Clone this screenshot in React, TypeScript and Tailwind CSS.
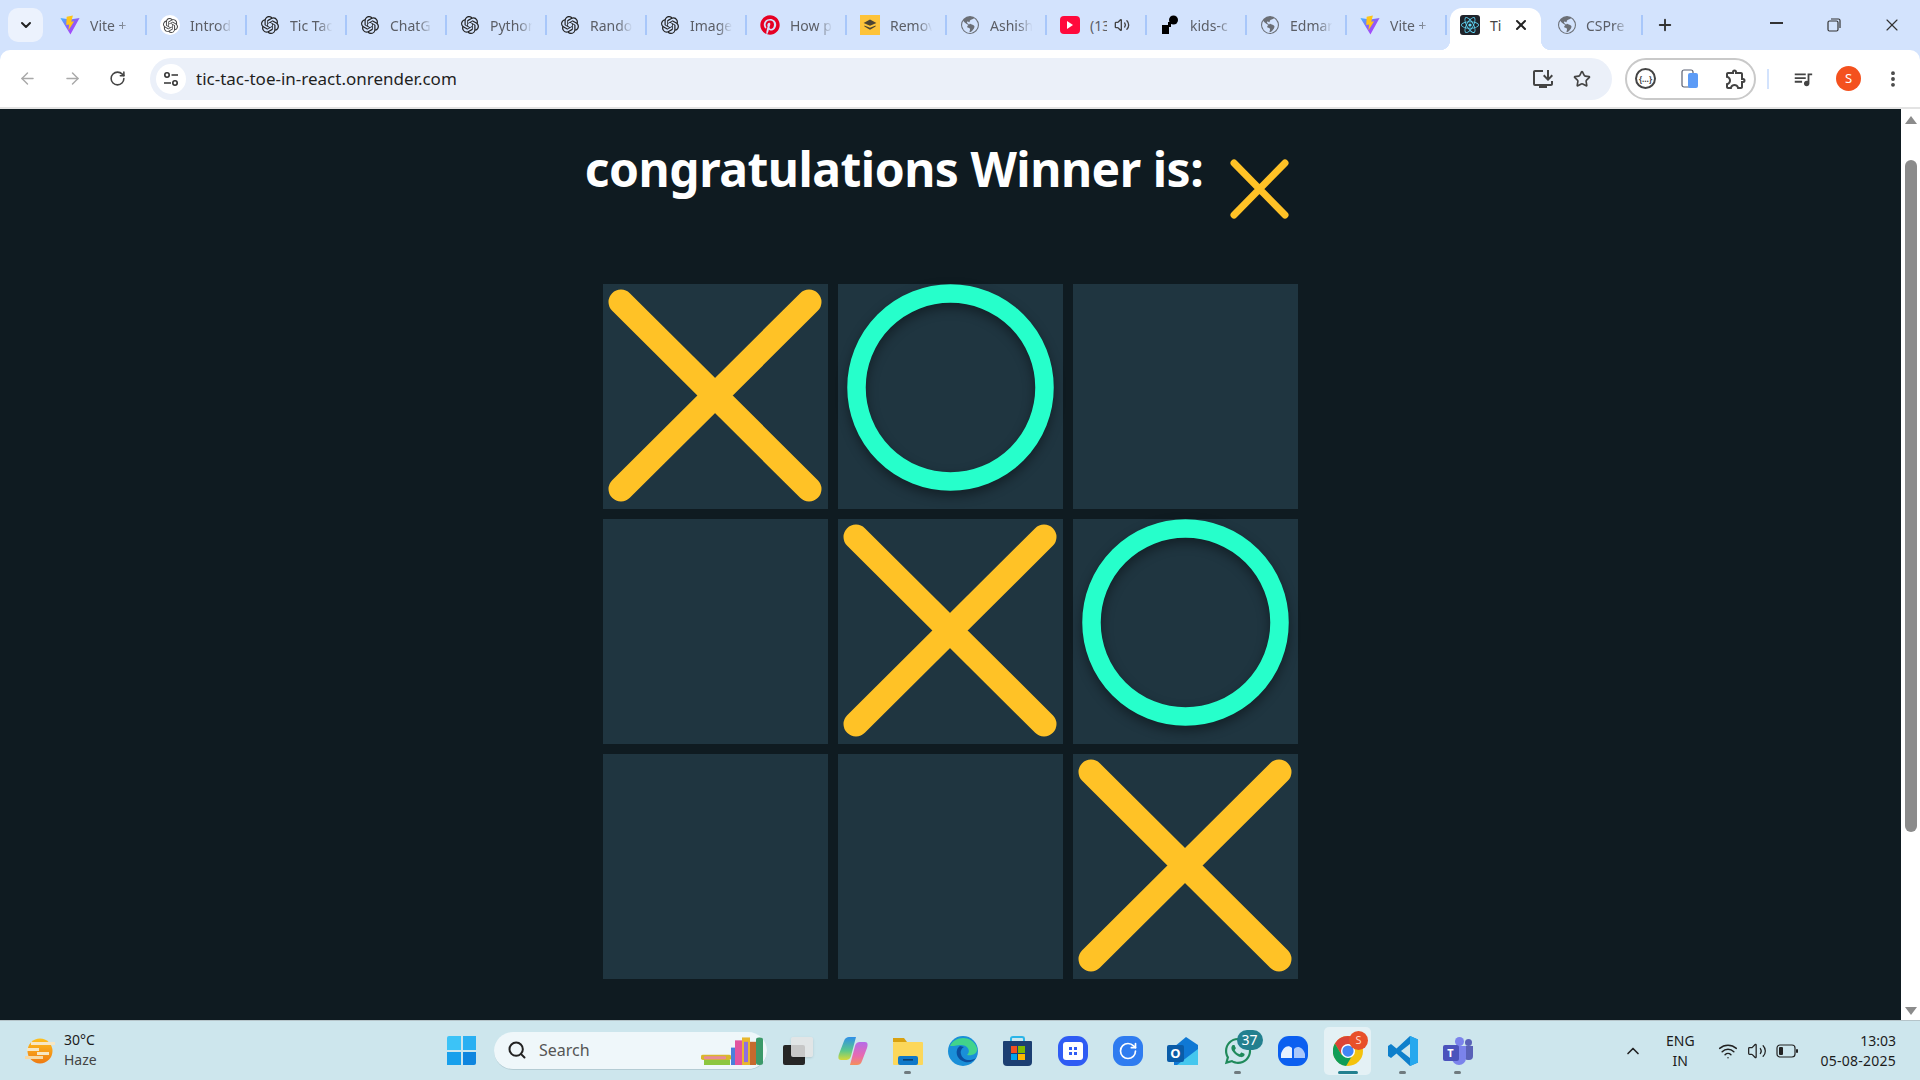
import { ArrowLeft, ArrowRight, ChevronDown, ChevronUp, EllipsisVertical, Plus, RotateCw, Search, Star, Volume2, Wifi, X } from "lucide-react";
import { BsGlobeAmericas } from "react-icons/bs";
import { FaPinterest, FaReact, FaWhatsapp } from "react-icons/fa";
import { MdOutlineExtension, MdOutlineInstallDesktop, MdQueueMusic } from "react-icons/md";
import { SiOpenai } from "react-icons/si";
import type { ReactNode } from "react";

function ViteIcon() {
  return (
    <svg viewBox="0 0 24 24" className="h-[22px] w-[22px]">
      <defs>
        <linearGradient id="vitebody" x1="0" y1="0" x2="1" y2="1">
          <stop offset="0" stopColor="#41b8ff" />
          <stop offset="0.5" stopColor="#8f5cf7" />
          <stop offset="1" stopColor="#bd34fe" />
        </linearGradient>
      </defs>
      <path d="M0.5 3.5 L12 5.5 L23.5 3.5 L12.5 23.5 Z" fill="url(#vitebody)" />
      <path d="M15.5 0.5 L8 2 L7.5 12 L11 11.5 L10 18.5 L17 7.5 L13.5 8 Z" fill="#ffc517" />
    </svg>
  );
}

function Glob() {
  return <BsGlobeAmericas className="h-[18px] w-[18px] text-[#6b6f76]" />;
}

function ChatIcon({ bg }: { bg?: boolean }) {
  return (
    <div className={`flex h-5 w-5 items-center justify-center rounded-full ${bg ? "bg-white" : ""}`}>
      <SiOpenai className={bg ? "h-[15px] w-[15px] text-[#444]" : "h-[18px] w-[18px] text-[#222]"} />
    </div>
  );
}

function RemoveIcon() {
  return (
    <div className="flex h-5 w-5 items-center justify-center bg-[#fdc33a]">
      <svg viewBox="0 0 20 20" className="h-4 w-4">
        <path d="M10 3 L18 7.5 L10 11 L2 7.5 Z" fill="#4c4433" />
        <path d="M3 10.5 L10 13.5 L17 10.5 L17 12 L10 16 L3 12 Z" fill="#4c4433" />
      </svg>
    </div>
  );
}

function YoutubeIcon() {
  return (
    <div className="flex h-[18px] w-5 items-center justify-center rounded-[4px] bg-[#ff0a3c]">
      <div className="h-0 w-0 border-y-[4px] border-l-[6px] border-y-transparent border-l-white" />
    </div>
  );
}

function KidsIcon() {
  return (
    <svg viewBox="0 0 20 20" className="h-5 w-5">
      <path d="M2 10 H8 V7 H11 V12 H9 V19 H2 Z" fill="#000" />
      <circle cx="13.5" cy="5" r="4.5" fill="#000" />
    </svg>
  );
}

type TabItem = { label: string; icon: ReactNode; audio?: boolean };

const tabs: TabItem[] = [
  { label: "Vite +", icon: <ViteIcon /> },
  { label: "Introd", icon: <ChatIcon bg /> },
  { label: "Tic Tac", icon: <ChatIcon /> },
  { label: "ChatG", icon: <ChatIcon /> },
  { label: "Python", icon: <ChatIcon /> },
  { label: "Rando", icon: <ChatIcon /> },
  { label: "Image", icon: <ChatIcon /> },
  { label: "How p", icon: <FaPinterest className="h-5 w-5 text-[#e60023]" /> },
  { label: "Remov", icon: <RemoveIcon /> },
  { label: "Ashish", icon: <Glob /> },
  { label: "(13", icon: <YoutubeIcon />, audio: true },
  { label: "kids-c", icon: <KidsIcon /> },
  { label: "Edmar", icon: <Glob /> },
  { label: "Vite +", icon: <ViteIcon /> },
];

function Tab({ tab }: { tab: TabItem }) {
  return (
    <div className="flex h-full w-[100px] flex-shrink-0 items-center pl-[13px]">
      <div className="flex h-5 w-5 flex-shrink-0 items-center justify-center">{tab.icon}</div>
      <span className={`ml-[10px] whitespace-nowrap text-[14px] text-[#5b5e66] ${tab.audio ? "w-[17px] overflow-hidden" : "w-[50px] [mask-image:linear-gradient(to_right,black_55%,transparent_85%)]"}`}>
        {tab.label}
      </span>
      {tab.audio && <Volume2 className="ml-[7px] h-4 w-4 text-[#444]" />}
      <div className="ml-auto h-5 w-[2px] flex-shrink-0 bg-[#a8c7fa]" />
    </div>
  );
}

function TabStrip() {
  return (
    <div className="flex h-[50px] flex-shrink-0 items-center bg-[#d3e3fd] pl-2">
      <div className="flex h-[34px] w-[35px] items-center justify-center rounded-[10px] bg-[#ecf2fd]">
        <ChevronDown className="h-4 w-4 text-[#222]" strokeWidth={3} />
      </div>
      <div className="ml-1 flex h-full">
        {tabs.map((t, i) => (
          <Tab key={i} tab={t} />
        ))}
        <div className="relative ml-[3px] mt-2 flex h-[42px] w-[91px] items-center rounded-t-[12px] bg-white pb-2 pl-[10px]">
          <span className="absolute bottom-0 left-[-10px] h-[10px] w-[10px] bg-[radial-gradient(circle_at_0_0,transparent_10px,white_10.5px)]" />
          <span className="absolute bottom-0 right-[-10px] h-[10px] w-[10px] bg-[radial-gradient(circle_at_100%_0,transparent_10px,white_10.5px)]" />
          <div className="flex h-5 w-5 items-center justify-center rounded-[3px] bg-[#20232a]">
            <FaReact className="h-[18px] w-[18px] text-[#61dafb]" />
          </div>
          <span className="ml-[10px] w-[12px] text-[14px] text-[#444]">Ti</span>
          <X className="ml-[11px] h-4 w-4 text-[#222]" strokeWidth={3} />
        </div>
        <div className="flex h-full w-[102px] items-center pl-[17px]">
          <Glob />
          <span className="ml-[10px] w-[50px] whitespace-nowrap text-[14px] text-[#5b5e66] [mask-image:linear-gradient(to_right,black_55%,transparent_85%)]">
            CSPre
          </span>
          <div className="ml-auto h-5 w-[2px] flex-shrink-0 bg-[#a8c7fa]" />
        </div>
      </div>
      <Plus className="ml-[13px] h-[18px] w-[18px] text-[#333]" strokeWidth={2.5} />
      <div className="ml-auto flex h-full">
        <div className="flex w-[57px] items-center justify-center pr-[4px]">
          <div className="mb-[4px] h-[2px] w-[13px] bg-[#333]" />
        </div>
        <div className="flex w-[56px] items-center justify-center pr-[2px]">
          <svg viewBox="0 0 14 14" className="h-[14px] w-[14px]" fill="none" stroke="#333" strokeWidth="1.2">
            <rect x="1" y="3" width="10" height="10" rx="1.5" />
            <path d="M4 1 H11.5 A1.5 1.5 0 0 1 13 2.5 V10" />
          </svg>
        </div>
        <div className="flex w-[57px] items-center justify-center">
          <X className="h-5 w-5 text-[#333]" strokeWidth={1.4} />
        </div>
      </div>
    </div>
  );
}

function SiteIcon() {
  return (
    <svg viewBox="0 0 16 16" className="h-4 w-4" fill="none" stroke="#333" strokeWidth="1.6">
      <circle cx="4" cy="4" r="2.2" />
      <path d="M8.5 4 H15 M1 12 H8" />
      <circle cx="12" cy="12" r="2.2" />
    </svg>
  );
}

function Toolbar() {
  return (
    <div className="flex h-[59px] flex-shrink-0 items-center rounded-t-[10px] border-b-2 border-[#e3e3e3] bg-white">
      <ArrowLeft className="ml-[18px] h-[19px] w-[19px] text-[#a9a9a9]" strokeWidth={1.8} />
      <ArrowRight className="ml-[26px] h-[19px] w-[19px] text-[#a9a9a9]" strokeWidth={1.8} />
      <RotateCw className="ml-[27px] h-[17px] w-[17px] text-[#444]" strokeWidth={2.2} />
      <div className="ml-[24px] flex h-[42px] w-[1462px] items-center rounded-full bg-[#ebf0f9] pl-[6px]">
        <div className="flex h-[30px] w-[30px] items-center justify-center rounded-full bg-white">
          <SiteIcon />
        </div>
        <span className="ml-[10px] text-[17px] text-[#1f1f1f]">tic-tac-toe-in-react.onrender.com</span>
        <MdOutlineInstallDesktop className="ml-auto h-[24px] w-[24px] text-[#444]" />
        <Star className="ml-[18px] mr-[21px] h-[18px] w-[18px] text-[#444]" strokeWidth={2.2} />
      </div>
      <div className="ml-[13px] flex h-[42px] w-[131px] items-center rounded-full border-2 border-[#c9c9c9] pl-[8px]">
        <div className="flex h-[21px] w-[21px] items-center justify-center rounded-full border-2 border-[#444] text-[8px] font-bold leading-none text-[#444]">
          {"{…}"}
        </div>
        <svg viewBox="0 0 18 20" className="ml-[25px] h-5 w-[18px]">
          <rect x="1" y="1" width="11" height="17" rx="2" fill="white" stroke="#5a6072" strokeWidth="1.2" />
          <rect x="7" y="4" width="10" height="15" rx="2" fill="#5c9bf6" />
        </svg>
        <MdOutlineExtension className="ml-[25px] h-[24px] w-[24px] text-[#444]" />
      </div>
      <div className="ml-[11px] h-[20px] w-[2px] bg-[#d3e3fd]" />
      <MdQueueMusic className="ml-[23px] h-[22px] w-[22px] text-[#444]" />
      <div className="ml-[22px] flex h-[25px] w-[25px] items-center justify-center rounded-full bg-[#f4511e] text-[13px] text-white">S</div>
      <EllipsisVertical className="ml-[22px] h-5 w-5 text-[#444]" strokeWidth={2.6} />
    </div>
  );
}

function CrossMark() {
  return (
    <svg viewBox="0 0 225 225" className="h-[225px] w-[225px] blur-[0.6px]">
      <path d="M18 18 L206 205 M206 18 L18 205" stroke="#ffc226" strokeWidth={25} strokeLinecap="round" />
    </svg>
  );
}

function Cell({ mark }: { mark?: "x" | "o" }) {
  return (
    <div className="h-[225px] w-[225px] bg-[#1f3540]">
      {mark === "x" && <CrossMark />}
      {mark === "o" && (
        <svg viewBox="0 0 225 225" className="h-[225px] w-[225px] drop-shadow-[0_5px_6px_rgba(0,0,0,0.4)]">
          <circle cx="112.5" cy="103.5" r="94" fill="none" stroke="#26ffcb" strokeWidth="18.5" />
        </svg>
      )}
    </div>
  );
}

function Page() {
  return (
    <div className="flex min-w-0 flex-1 flex-col items-center bg-[#0f1b21]">
      <div className="mt-[27px] flex h-[94px] items-start">
        <h1 className="text-[48px] font-bold leading-[65px] tracking-[-0.5px] text-white">congratulations Winner is:</h1>
        <div className="ml-[22px] mr-[25px] mt-[21px] h-[66px] w-[66px]">
          <svg viewBox="0 0 66 66" className="h-[66px] w-[66px]">
            <path d="M9 6 L60 58 M60 6 L9 58" stroke="#ffc226" strokeWidth="7" strokeLinecap="round" />
          </svg>
        </div>
      </div>
      <div className="mt-[54px] grid grid-cols-[225px_225px_225px] gap-[10px]">
        <Cell mark="x" />
        <Cell mark="o" />
        <Cell />
        <Cell />
        <Cell mark="x" />
        <Cell mark="o" />
        <Cell />
        <Cell />
        <Cell mark="x" />
      </div>
    </div>
  );
}

function Scrollbar() {
  return (
    <div className="flex w-[19px] flex-shrink-0 flex-col items-center bg-white">
      <div className="mt-[7px] h-0 w-0 border-x-[6px] border-b-[8px] border-x-transparent border-b-[#8b8b8b]" />
      <div className="mt-[36px] h-[672px] w-[12px] rounded-full bg-[#8b8b8b]" />
      <div className="mb-[5px] mt-auto h-0 w-0 border-x-[6px] border-t-[8px] border-x-transparent border-t-[#8b8b8b]" />
    </div>
  );
}

function WeatherIcon() {
  return (
    <svg viewBox="0 0 30 26" className="h-[26px] w-[30px]">
      <defs>
        <linearGradient id="sun" x1="0" y1="0" x2="0" y2="1">
          <stop offset="0" stopColor="#ffc01e" />
          <stop offset="1" stopColor="#ee7a12" />
        </linearGradient>
      </defs>
      <circle cx="15" cy="13" r="12.5" fill="url(#sun)" />
      <rect x="6" y="4" width="24" height="3" fill="#f7e7c4" />
      <rect x="2" y="10" width="12" height="3" fill="#f7e7c4" />
      <rect x="12" y="14" width="12" height="3" fill="#f7e7c4" />
      <rect x="0" y="18" width="18" height="3" fill="#f7d9a4" />
    </svg>
  );
}

function WinLogo() {
  return (
    <div className="grid h-[29px] w-[29px] grid-cols-2 gap-[2px]">
      <div className="rounded-tl-[2px] bg-[#3cc3f7]" />
      <div className="bg-[#2ab0f2]" />
      <div className="bg-[#18a0ec]" />
      <div className="rounded-br-[2px] bg-[#0f86df]" />
    </div>
  );
}

function Books() {
  return (
    <svg viewBox="0 0 64 40" preserveAspectRatio="none" className="h-[29px] w-[64px]">
      <rect x="0" y="26" width="30" height="7" rx="2" fill="#d9b72a" />
      <rect x="3" y="28" width="22" height="4" rx="1" fill="#e88b97" />
      <rect x="3" y="33" width="26" height="7" fill="#8cc63f" />
      <rect x="30" y="16" width="4" height="24" fill="#4a7fdc" />
      <rect x="34" y="6" width="7" height="34" fill="#e255a0" />
      <rect x="41" y="2" width="8" height="38" fill="#e8b72e" />
      <rect x="43" y="8" width="4" height="28" fill="#8f6fe0" />
      <rect x="49" y="8" width="6" height="32" fill="#c66a2e" />
      <rect x="55" y="2" width="7" height="38" rx="3" fill="#3c9a6a" />
    </svg>
  );
}

function TasksIcon() {
  return (
    <div className="relative h-[28px] w-[30px]">
      <div className="absolute bottom-0 left-0 h-[20px] w-[22px] rounded-[2px] bg-[#262626]" />
      <div className="absolute right-0 top-0 h-[20px] w-[22px] rounded-[2px] bg-[#e4e4e4]/85 shadow-sm" />
    </div>
  );
}

function CopilotIcon() {
  return (
    <svg viewBox="0 0 30 28" className="h-[28px] w-[30px]">
      <defs>
        <linearGradient id="cpa" x1="0" y1="0" x2="0" y2="1">
          <stop offset="0" stopColor="#2f8fe8" />
          <stop offset="0.6" stopColor="#5cc98a" />
          <stop offset="1" stopColor="#d6d93a" />
        </linearGradient>
        <linearGradient id="cpb" x1="0" y1="0" x2="0" y2="1">
          <stop offset="0" stopColor="#b56be8" />
          <stop offset="0.6" stopColor="#e86ab0" />
          <stop offset="1" stopColor="#f4905a" />
        </linearGradient>
      </defs>
      <path d="M11 0 H18 L13 19 C12 23 9 23 7 23 H3 C0 23 0 20 1 17 L6 4 C7 1 9 0 11 0 Z" fill="url(#cpa)" />
      <path d="M19 28 H12 L17 9 C18 5 21 5 23 5 H27 C30 5 30 8 29 11 L24 24 C23 27 21 28 19 28 Z" fill="url(#cpb)" />
    </svg>
  );
}

function FolderIcon() {
  return (
    <svg viewBox="0 0 30 28" className="h-[28px] w-[30px]">
      <path d="M0 1 H11 L14 5 H0 Z" fill="#d9a110" />
      <rect x="0" y="5" width="30" height="23" rx="1" fill="#fcd75a" />
      <rect x="5" y="19" width="20" height="9" rx="2" fill="#0f78c8" />
      <rect x="10" y="22" width="10" height="1.6" fill="#0b3f6e" />
    </svg>
  );
}

function EdgeIcon() {
  return (
    <svg viewBox="0 0 30 30" className="h-[30px] w-[30px]">
      <circle cx="15" cy="15" r="15" fill="#1a8fd8" />
      <path d="M2 10 C6 0 24 -2 29 12 C30 18 24 20 19 19 C24 14 18 8 12 9 C7 10 4 10 2 10 Z" fill="#42d48b" />
      <path d="M12 10 C7 13 7 23 17 26 C22 27 26 25 28 22 C22 26 14 24 13 18 C12 15 14 12 16 11 Z" fill="#0b4f9e" />
    </svg>
  );
}

function StoreIcon() {
  return (
    <div className="relative h-[30px] w-[29px]">
      <div className="absolute left-[7px] top-0 h-[7px] w-[15px] rounded-t-[3px] border-2 border-b-0 border-[#2bb5e8]" />
      <div className="absolute bottom-0 left-0 flex h-[25px] w-[29px] items-center justify-center rounded-b-[4px] rounded-t-[1px] bg-[#1c3f72]">
        <div className="grid h-[14px] w-[14px] grid-cols-2 gap-[1px]">
          <div className="bg-[#f25022]" />
          <div className="bg-[#7fba00]" />
          <div className="bg-[#00a4ef]" />
          <div className="bg-[#ffb900]" />
        </div>
      </div>
    </div>
  );
}

function SquircleApp({ children, color }: { children: ReactNode; color: string }) {
  return (
    <div className={`flex h-[30px] w-[30px] items-center justify-center rounded-[11px] ${color}`}>{children}</div>
  );
}

function OutlookIcon() {
  return (
    <div className="relative h-[28px] w-[31px]">
      <svg viewBox="0 0 31 28" className="absolute inset-0 h-[28px] w-[31px]">
        <path d="M7 10 L19 0 L31 8 V28 H7 Z" fill="#0f78d4" />
        <path d="M10 28 L31 12 V28 Z" fill="#45c7ee" />
      </svg>
      <div className="absolute bottom-[3px] left-0 flex h-[17px] w-[17px] items-center justify-center rounded-[2px] bg-[#0a5ca8] text-[13px] font-bold leading-none text-white">O</div>
    </div>
  );
}

function ChromeIcon() {
  return (
    <svg viewBox="0 0 32 32" className="h-[30px] w-[30px]">
      <circle cx="16" cy="16" r="16" fill="#f4c20d" />
      <path d="M16 0 A16 16 0 0 0 2 8 L9 20 L16 9 H30 A16 16 0 0 0 16 0 Z" fill="#db4437" />
      <path d="M2 8 A16 16 0 0 0 14 32 L21 20 L9 20 Z" fill="#0f9d58" />
      <circle cx="16" cy="16" r="7.5" fill="#fff" />
      <circle cx="16" cy="16" r="6" fill="#4285f4" />
    </svg>
  );
}

function VsCodeIcon() {
  return (
    <svg viewBox="0 0 30 30" className="h-[30px] w-[30px]">
      <path d="M22 0 L30 3.5 V26.5 L22 30 L8.5 17.5 L3 22 L0 20 V10 L3 8 L8.5 12.5 Z" fill="#0e7fcb" />
      <path d="M22 0 L30 3.5 V26.5 L22 30 Z" fill="#27a8ee" />
      <path d="M22 8 L13 15 L22 22 Z" fill="#cde6ed" />
    </svg>
  );
}

function TeamsIcon() {
  return (
    <div className="relative h-[28px] w-[30px]">
      <div className="absolute right-0 top-[9px] h-[14px] w-[9px] rounded-b-[4px] bg-[#5a62b8]" />
      <div className="absolute right-[1px] top-[2px] h-[7px] w-[7px] rounded-full bg-[#5a62b8]" />
      <div className="absolute left-[9px] top-[9px] h-[19px] w-[14px] rounded-b-[7px] bg-[#7b83eb]" />
      <div className="absolute left-[12px] top-0 h-[9px] w-[9px] rounded-full bg-[#7b83eb]" />
      <div className="absolute left-0 top-[8px] flex h-[16px] w-[16px] items-center justify-center rounded-[2px] bg-[#4b53bc] text-[11px] font-bold leading-none text-white">T</div>
    </div>
  );
}

type TaskItem = { key: string; node: ReactNode; dot?: boolean };

const taskItems: TaskItem[] = [
  { key: "tasks", node: <TasksIcon /> },
  { key: "copilot", node: <CopilotIcon /> },
  { key: "files", node: <FolderIcon />, dot: true },
  { key: "edge", node: <EdgeIcon /> },
  { key: "store", node: <StoreIcon /> },
  {
    key: "app",
    node: (
      <SquircleApp color="bg-[#2f5cf4]">
        <div className="flex h-[18px] w-[20px] items-center justify-center rounded-[3px] bg-white">
          <div className="grid h-[8px] w-[8px] grid-cols-2 gap-[2px]">
            <div className="bg-[#2f5cf4]" />
            <div className="bg-[#2f5cf4]" />
            <div className="bg-[#2f5cf4]" />
            <div className="bg-[#2f5cf4]" />
          </div>
        </div>
      </SquircleApp>
    ),
  },
  {
    key: "sync",
    node: (
      <SquircleApp color="bg-[#2f7cf0]">
        <RotateCw className="h-5 w-5 text-white" strokeWidth={2} />
      </SquircleApp>
    ),
  },
  { key: "outlook", node: <OutlookIcon /> },
  {
    key: "whatsapp",
    node: (
      <div className="relative">
        <FaWhatsapp className="h-[30px] w-[30px] text-[#1f8a5b]" />
        <span className="absolute right-[-10px] top-[-6px] flex h-[20px] w-[26px] items-center justify-center rounded-full bg-[#23808f] text-[14px] text-white">37</span>
      </div>
    ),
    dot: true,
  },
  {
    key: "zoom",
    node: (
      <SquircleApp color="bg-[#0b5ff0]">
        <svg viewBox="0 0 24 14" className="h-[14px] w-[24px]">
          <path d="M0 14 V10 C2 3 7 0 11 4 V14 Z" fill="#e6f0ff" />
          <path d="M13 14 V5 C16 1 22 3 24 10 V14 Z" fill="#a9c8fb" />
        </svg>
      </SquircleApp>
    ),
  },
  { key: "chrome", node: <ChromeIcon /> },
  { key: "code", node: <VsCodeIcon />, dot: true },
  { key: "teams", node: <TeamsIcon />, dot: true },
];

function TaskButton({ item }: { item: TaskItem }) {
  const isChrome = item.key === "chrome";
  return (
    <div className="relative flex h-[48px] w-[55px] items-center justify-center">
      {isChrome ? (
        <div className="relative flex h-[48px] w-[47px] items-center justify-center rounded-[5px] bg-[#e4f1f5]">
          {item.node}
          <span className="absolute right-[3px] top-[4px] flex h-[19px] w-[19px] items-center justify-center rounded-full bg-[#e8502a] text-[11px] text-[#ffd9cc]">S</span>
          <span className="absolute bottom-[1px] left-[14px] h-[3px] w-[20px] rounded-full bg-[#23808f]" />
        </div>
      ) : (
        item.node
      )}
      {item.dot && <span className="absolute bottom-[1px] left-[24px] h-[3px] w-[7px] rounded-full bg-[#6f7a7e]" />}
    </div>
  );
}

function Taskbar() {
  return (
    <div className="flex h-[60px] flex-shrink-0 items-center border-t border-[#b5c4c9] bg-[#cde6ed] pl-[25px] text-[14px] leading-[20px] text-[#1c1c1c]">
      <div className="flex w-[422px] items-center">
        <WeatherIcon />
        <div className="ml-[9px] mb-[2px] flex flex-col">
          <span>30°C</span>
          <span className="text-[#444]">Haze</span>
        </div>
      </div>
      <WinLogo />
      <div className="ml-[18px] flex h-[38px] w-[273px] items-center rounded-full border-b border-[#b4ccd4] bg-[#eff7fa] pl-[13px]">
        <Search className="h-[20px] w-[20px] text-[#222]" strokeWidth={2.4} />
        <span className="ml-[12px] text-[16px] text-[#555]">Search</span>
        <div className="ml-auto mr-[2px]">
          <Books />
        </div>
      </div>
      <div className="ml-[3px] flex">
        {taskItems.map((item) => (
          <TaskButton key={item.key} item={item} />
        ))}
      </div>
      <ChevronUp className="ml-[138px] h-[20px] w-[20px] text-[#222]" strokeWidth={2} />
      <div className="ml-[23px] flex flex-col items-center">
        <span>ENG</span>
        <span>IN</span>
      </div>
      <Wifi className="ml-[23px] h-[20px] w-[20px] text-[#222]" strokeWidth={1.8} />
      <Volume2 className="ml-[9px] h-[20px] w-[20px] text-[#222]" strokeWidth={1.5} />
      <svg viewBox="0 0 22 14" className="ml-[9px] h-[14px] w-[22px]">
        <rect x="1" y="1" width="18" height="12" rx="3" fill="none" stroke="#222" strokeWidth="1.2" />
        <rect x="3" y="3" width="4" height="8" rx="1" fill="#222" />
        <rect x="20" y="5" width="2" height="4" rx="1" fill="#222" />
      </svg>
      <div className="ml-auto mr-6 flex flex-col items-end">
        <span>13:03</span>
        <span className="tracking-[0.25px]">05-08-2025</span>
      </div>
    </div>
  );
}

export default function App() {
  return (
    <div className="flex h-[1080px] w-[1920px] flex-col overflow-hidden bg-[#d3e3fd] font-['Noto_Sans',sans-serif]">
      <TabStrip />
      <Toolbar />
      <div className="flex min-h-0 flex-1">
        <Page />
        <Scrollbar />
      </div>
      <Taskbar />
    </div>
  );
}
